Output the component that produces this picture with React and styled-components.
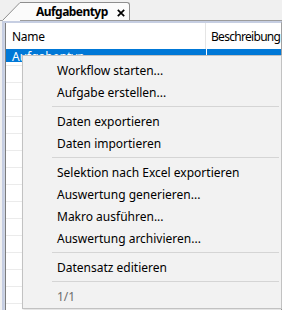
import React from 'react';
import styled, { createGlobalStyle } from 'styled-components';

const GlobalStyle = createGlobalStyle`
  body {
    margin: 0;
    background: #f0f0f0;
    font-family: "Segoe UI", "Noto Sans", "Open Sans", sans-serif;
  }
`

const Frame = styled.div`
  position: relative;
  width: 282px;
  height: 310px;
  overflow: hidden;
  background: #f0f0f0;
  font-size: 12px;
  color: #000;
`

const TabStrip = styled.div`
  height: 21px;
  box-sizing: border-box;
  padding: 2px 0 0 2px;
  display: flex;
  align-items: stretch;
  border-bottom: 1px solid #9c9c9c;
`

const Slant = styled.svg`
  display: block;
  width: 18px;
  height: 19px;
  flex: none;
`

const TabBody = styled.div`
  width: 110px;
  box-sizing: border-box;
  display: flex;
  align-items: center;
  padding-left: 16px;
  background: #fbfbfb;
  border-top: 1px solid #8e8e8e;
  border-right: 1px solid #8e8e8e;
  border-top-right-radius: 3px;
  font-weight: bold;
  font-size: 12px;
  letter-spacing: -0.55px;
`

const CloseIcon = styled.svg`
  display: block;
  width: 8px;
  height: 8px;
  margin-left: 9px;
  margin-top: 2px;
  flex: none;
`

const Panel = styled.div`
  margin-left: 2px;
  height: 289px;
  box-sizing: border-box;
  border: 2px solid #c6cee2;
  border-bottom: none;
  border-right: 1px solid #a0a0a0;
  background: #cfd6e6;
  padding-left: 1px;
`

const ListBox = styled.div`
  height: 100%;
  background: #fff;
  border-left: 1px solid #7c7c7c;
`

const HeaderRow = styled.div`
  display: flex;
  height: 26px;
  align-items: stretch;
`

const HeaderCell = styled.div`
  width: ${p => p.$w || 'auto'};
  flex: ${p => (p.$w ? 'none' : 1)};
  min-width: 0;
  box-sizing: border-box;
  padding-left: ${p => (p.$w ? '6px' : '5px')};
  display: flex;
  align-items: center;
  white-space: nowrap;
  letter-spacing: ${p => (p.$w ? '-0.3px' : '-0.7px')};
  border-right: ${p => (p.$w ? '1px solid #e5e5e5' : 'none')};
`

const SelectedRow = styled.div`
  display: flex;
  height: 13px;
  margin-bottom: 3px;
  background: #0078d7;
  color: #fff;
`

const SelCell = styled.div`
  width: ${p => p.$w || 'auto'};
  flex: ${p => (p.$w ? 'none' : 1)};
  box-sizing: border-box;
  padding-left: 6px;
  line-height: 15px;
  border-right: ${p => (p.$w ? '1px solid #fff' : 'none')};
  white-space: nowrap;
`

const GridRow = styled.div`
  height: 17px;
  box-sizing: border-box;
  border-top: 1px solid #ebebeb;
`

const Menu = styled.div`
  position: absolute;
  left: 22px;
  top: 55px;
  width: 260px;
  height: 254px;
  box-sizing: border-box;
  padding: 3px 0 2px;
  background: #f2f2f2;
  border: 1px solid #c2c2c2;
  box-shadow: 1px 1px 2px rgba(0, 0, 0, 0.15);
`

const Item = styled.div`
  height: 22px;
  display: flex;
  align-items: center;
  padding-left: 34px;
  color: ${p => (p.$disabled ? '#6d6d6d' : '#000')};
  white-space: nowrap;
`

const Separator = styled.div`
  height: 7px;
  display: flex;
  align-items: center;
  margin: 0 2px 0 29px;

  &::after {
    content: '';
    flex: 1;
    height: 1px;
    background: #d5d5d5;
  }
`

const menu = [
  'Workflow starten...',
  'Aufgabe erstellen...',
  '-',
  'Daten exportieren',
  'Daten importieren',
  '-',
  'Selektion nach Excel exportieren',
  'Auswertung generieren...',
  'Makro ausführen...',
  'Auswertung archivieren...',
  '-',
  'Datensatz editieren',
  '-',
]

const App = () => {
  return (
    <Frame>
      <GlobalStyle />
      <TabStrip>
        <Slant viewBox="0 0 18 19">
          <polygon points="0,19 18,0.5 18,19" fill="#fbfbfb" />
          <line x1="0.5" y1="18.5" x2="18" y2="0.5" stroke="#8e8e8e" strokeWidth="1" />
        </Slant>
        <TabBody>
          Aufgabentyp
          <CloseIcon viewBox="0 0 8 8">
            <path d="M0.8 0.8 L7.2 7.2 M7.2 0.8 L0.8 7.2" stroke="#000" strokeWidth="1.7" />
          </CloseIcon>
        </TabBody>
      </TabStrip>
      <Panel>
        <ListBox>
          <HeaderRow>
            <HeaderCell $w="200px">Name</HeaderCell>
            <HeaderCell>Beschreibung</HeaderCell>
          </HeaderRow>
          <SelectedRow>
            <SelCell $w="201px">Aufgabentyp</SelCell>
            <SelCell />
          </SelectedRow>
          {Array.from({ length: 15 }).map((_, i) => (
            <GridRow key={i} />
          ))}
        </ListBox>
      </Panel>
      <Menu>
        {menu.map((m, i) => (m === '-' ? <Separator key={i} /> : <Item key={i}>{m}</Item>))}
        <Item $disabled>1/1</Item>
      </Menu>
    </Frame>
  );
};

export default App;
